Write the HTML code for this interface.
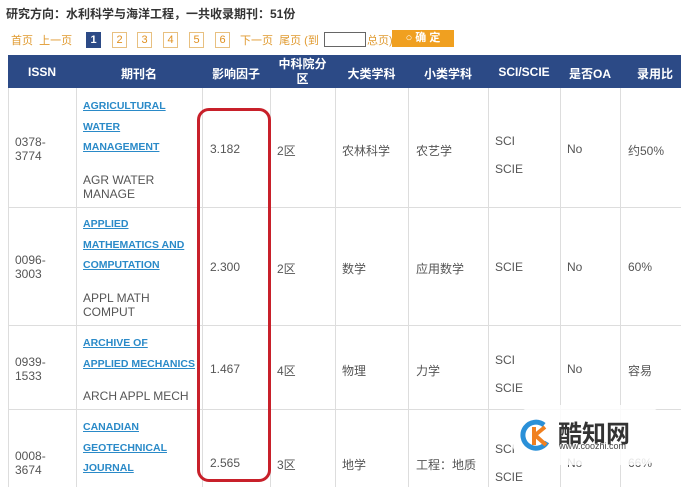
<html><head><style>
body{margin:0;width:681px;height:487px;background:#fff;position:relative;overflow:hidden;font-family:"Liberation Sans","Noto Sans CJK SC",sans-serif;color:#444}
.a{position:absolute;white-space:nowrap}
.t{font-size:12px;color:#555}
.l{color:#2a8ac8;font-weight:bold;font-size:10.5px;text-decoration:underline;line-height:20.5px}
.h{color:#fff;font-weight:bold;font-size:12px;text-align:center}
.v{position:absolute;top:88px;bottom:0;width:1px;background:#ddd}
.r{position:absolute;left:8px;right:0;height:1px;background:#ddd}
.pg{position:absolute;top:32px;width:13px;height:14px;border:1px solid #e8c080;font-size:11px;color:#e09020;text-align:center;line-height:14px}
</style></head><body>
<div class="a" style="left:6px;top:5px;font-size:12px;font-weight:bold;color:#333">研究方向：水利科学与海洋工程，一共收录期刊：51份</div>
<div class="a" style="left:11px;top:32px;font-size:11px;color:#e09a30">首页 &nbsp;上一页</div>
<div class="pg" style="left:86px;background:#2c4a86;color:#fff;border-color:#2c4a86;font-weight:bold">1</div>
<div class="pg" style="left:112px">2</div><div class="pg" style="left:137px">3</div><div class="pg" style="left:163px">4</div><div class="pg" style="left:189px">5</div><div class="pg" style="left:215px">6</div>
<div class="a" style="left:240px;top:32px;font-size:11px;color:#e09a30">下一页 &nbsp;尾页 (到</div>
<div class="a" style="left:324px;top:32px;width:40px;height:13px;border:1px solid #666;background:#fff"></div>
<div class="a" style="left:367px;top:32px;font-size:11px;color:#e09a30">总页)</div>
<div class="a" style="left:392px;top:30px;width:62px;height:17px;background:#f0a020;color:#fff;font-size:11px;line-height:17px;text-align:center;font-weight:bold">○ 确 定</div>
<div class="a" style="left:8px;top:55px;right:0;height:33px;background:#2c4a86"></div>
<div class="a h" style="left:8px;top:65px;width:68px">ISSN</div>
<div class="a h" style="left:76px;top:65px;width:126px">期刊名</div>
<div class="a h" style="left:202px;top:65px;width:68px">影响因子</div>
<div class="a h" style="left:270px;top:57px;width:65px;line-height:15px;white-space:normal">中科院分<br>区</div>
<div class="a h" style="left:335px;top:65px;width:73px">大类学科</div>
<div class="a h" style="left:408px;top:65px;width:80px">小类学科</div>
<div class="a h" style="left:488px;top:65px;width:72px">SCI/SCIE</div>
<div class="a h" style="left:560px;top:65px;width:60px">是否OA</div>
<div class="a h" style="left:620px;top:65px;width:70px">录用比</div>
<div class="v" style="left:8px"></div><div class="v" style="left:76px"></div><div class="v" style="left:202px"></div><div class="v" style="left:270px"></div><div class="v" style="left:335px"></div><div class="v" style="left:408px"></div><div class="v" style="left:488px"></div><div class="v" style="left:560px"></div><div class="v" style="left:620px"></div>
<div class="r" style="top:207px"></div><div class="r" style="top:325px"></div><div class="r" style="top:409px"></div>

<div class="a t" style="left:15px;top:135px;line-height:14px">0378-<br>3774</div>
<div class="a l" style="left:83px;top:96px">AGRICULTURAL<br>WATER<br>MANAGEMENT</div>
<div class="a t" style="left:83px;top:173px;line-height:14px">AGR WATER<br>MANAGE</div>
<div class="a t" style="left:210px;top:142px">3.182</div>
<div class="a t" style="left:277px;top:142px">2区</div>
<div class="a t" style="left:342px;top:142px">农林科学</div>
<div class="a t" style="left:416px;top:142px">农艺学</div>
<div class="a t" style="left:495px;top:127px;line-height:28px">SCI<br>SCIE</div>
<div class="a t" style="left:567px;top:142px">No</div>
<div class="a t" style="left:628px;top:142px">约50%</div>

<div class="a t" style="left:15px;top:253px;line-height:14px">0096-<br>3003</div>
<div class="a l" style="left:83px;top:214px">APPLIED<br>MATHEMATICS AND<br>COMPUTATION</div>
<div class="a t" style="left:83px;top:291px;line-height:14px">APPL MATH<br>COMPUT</div>
<div class="a t" style="left:210px;top:260px">2.300</div>
<div class="a t" style="left:277px;top:260px">2区</div>
<div class="a t" style="left:342px;top:260px">数学</div>
<div class="a t" style="left:416px;top:260px">应用数学</div>
<div class="a t" style="left:495px;top:260px">SCIE</div>
<div class="a t" style="left:567px;top:260px">No</div>
<div class="a t" style="left:628px;top:260px">60%</div>

<div class="a t" style="left:15px;top:355px;line-height:14px">0939-<br>1533</div>
<div class="a l" style="left:83px;top:333px">ARCHIVE OF<br>APPLIED MECHANICS</div>
<div class="a t" style="left:83px;top:389px">ARCH APPL MECH</div>
<div class="a t" style="left:210px;top:362px">1.467</div>
<div class="a t" style="left:277px;top:362px">4区</div>
<div class="a t" style="left:342px;top:362px">物理</div>
<div class="a t" style="left:416px;top:362px">力学</div>
<div class="a t" style="left:495px;top:346px;line-height:28px">SCI<br>SCIE</div>
<div class="a t" style="left:567px;top:362px">No</div>
<div class="a t" style="left:628px;top:362px">容易</div>

<div class="a t" style="left:15px;top:449px;line-height:14px">0008-<br>3674</div>
<div class="a l" style="left:83px;top:417px">CANADIAN<br>GEOTECHNICAL<br>JOURNAL</div>
<div class="a t" style="left:210px;top:456px">2.565</div>
<div class="a t" style="left:277px;top:456px">3区</div>
<div class="a t" style="left:342px;top:456px">地学</div>
<div class="a t" style="left:416px;top:456px">工程：地质</div>
<div class="a t" style="left:495px;top:435px;line-height:28px">SCI<br>SCIE</div>
<div class="a t" style="left:567px;top:456px">No</div>
<div class="a t" style="left:628px;top:456px">66%</div>

<div class="a" style="left:197px;top:108px;width:68px;height:368px;border:3px solid #c8202a;border-radius:12px"></div>
<div class="a" style="left:510px;top:405px;width:160px;height:60px;background:rgba(255,255,255,0.85);border-radius:30px"></div>
<svg class="a" style="left:520px;top:418px" width="34" height="34" viewBox="0 0 34 34"><path d="M24 7 A13 13 0 1 0 27 24" fill="none" stroke="#2a90d8" stroke-width="5"/><path d="M14 9 L14 27 M14 18 L25 9 M16 18 L26 27" stroke="#f08020" stroke-width="4" fill="none"/></svg>
<div class="a" style="left:558px;top:414px;font-size:24px;font-weight:bold;color:#333">酷知网</div>
<div class="a" style="left:559px;top:441px;font-size:9px;color:#444">www.coozhi.com</div>
</body></html>
